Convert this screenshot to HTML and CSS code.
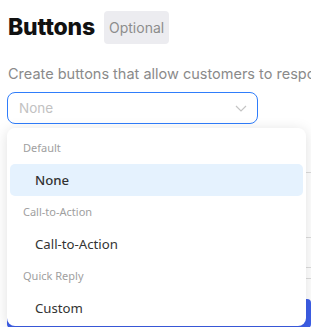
FILE: index.html
```html
<!DOCTYPE html>
<html>
<head>
<meta charset="utf-8">
<link rel="stylesheet" href="styles.css">
</head>
<body>
<div class="page">
  <div class="header">
    <h1 class="title">Buttons</h1>
    <span class="badge">Optional</span>
  </div>
  <p class="desc">Create buttons that allow customers to respond to your message or take action.</p>
  <div class="field">
    <div class="select">
      <span class="placeholder">None</span>
      <svg class="chev" width="12" height="7" viewBox="0 0 12 7"><path d="M1 1l5 5 5-5" fill="none" stroke="#c4c4c4" stroke-width="1.2"/></svg>
    </div>
    <div class="behind">
      <div class="brow r1"></div>
      <div class="brow r2"></div>
      <div class="brow r3"></div>
      <div class="brow r4"></div>
      <div class="bbtn"></div>
    </div>
    <div class="menu">
      <div class="group">Default</div>
      <div class="item selected">None</div>
      <div class="group">Call-to-Action</div>
      <div class="item">Call-to-Action</div>
      <div class="group">Quick Reply</div>
      <div class="item">Custom</div>
    </div>
  </div>
</div>
</body>
</html>
```

FILE: styles.css
```css
html, body {
  margin: 0;
  padding: 0;
  background: #fff;
  overflow: hidden;
}
body {
  font-family: Inter, "Noto Sans", sans-serif;
  width: 311px;
  height: 327px;
}
.page {
  padding: 11px 0 0 7px;
}
.header {
  display: flex;
  align-items: center;
  gap: 9px;
  padding-left: 1px;
}
.title {
  margin: 0;
  font-size: 23px;
  font-weight: 800;
  color: #111;
  line-height: 33px;
  letter-spacing: -0.2px;
}
.badge {
  height: 33px;
  line-height: 33px;
  padding: 0 5px;
  background: #ececf0;
  border-radius: 4px;
  font-size: 14px;
  color: #8c8c8c;
}
.desc {
  margin: 20px 0 0 1px;
  font-size: 14.5px;
  line-height: 20px;
  color: #8a8a8a;
  white-space: nowrap;
}
.field {
  position: relative;
  margin-top: 8px;
}
.select {
  height: 30px;
  border: 1px solid #2f7dfb;
  border-radius: 8px;
  display: flex;
  align-items: center;
  justify-content: space-between;
  padding: 0 10px 0 11px;
  box-sizing: content-box;
  width: 228px;
}
.placeholder {
  font-size: 13.5px;
  color: #c2c2c2;
}
.behind {
  margin-top: 4px;
  height: 200px;
  display: flex;
  flex-direction: column;
}
.brow {
  border-bottom: 1px solid #dcdcdc;
}
.r1 { height: 45px; }
.r2 { height: 66px; }
.r3 { height: 30px; }
.r4 { height: 10px; }
.bbtn {
  margin-top: 20px;
  height: 30px;
  background: #3d5ee8;
  border-radius: 4px;
}
.menu {
  position: absolute;
  top: 36px;
  left: 0;
  width: 299px;
  height: 198px;
  background: #fff;
  border-radius: 8px;
  box-shadow: 0 2px 14px rgba(0, 0, 0, 0.13);
  padding: 4px 3px;
  box-sizing: border-box;
  font-family: "Noto Sans", "Open Sans", sans-serif;
}
.group {
  height: 32px;
  line-height: 32px;
  padding-left: 13px;
  font-size: 11px;
  color: #a0a0a0;
}
.item {
  height: 32px;
  line-height: 32px;
  padding-left: 25px;
  font-size: 13.2px;
  color: #333;
  border-radius: 5px;
}
.item.selected {
  background: #e5f2fe;
  font-weight: 500;
}
```
